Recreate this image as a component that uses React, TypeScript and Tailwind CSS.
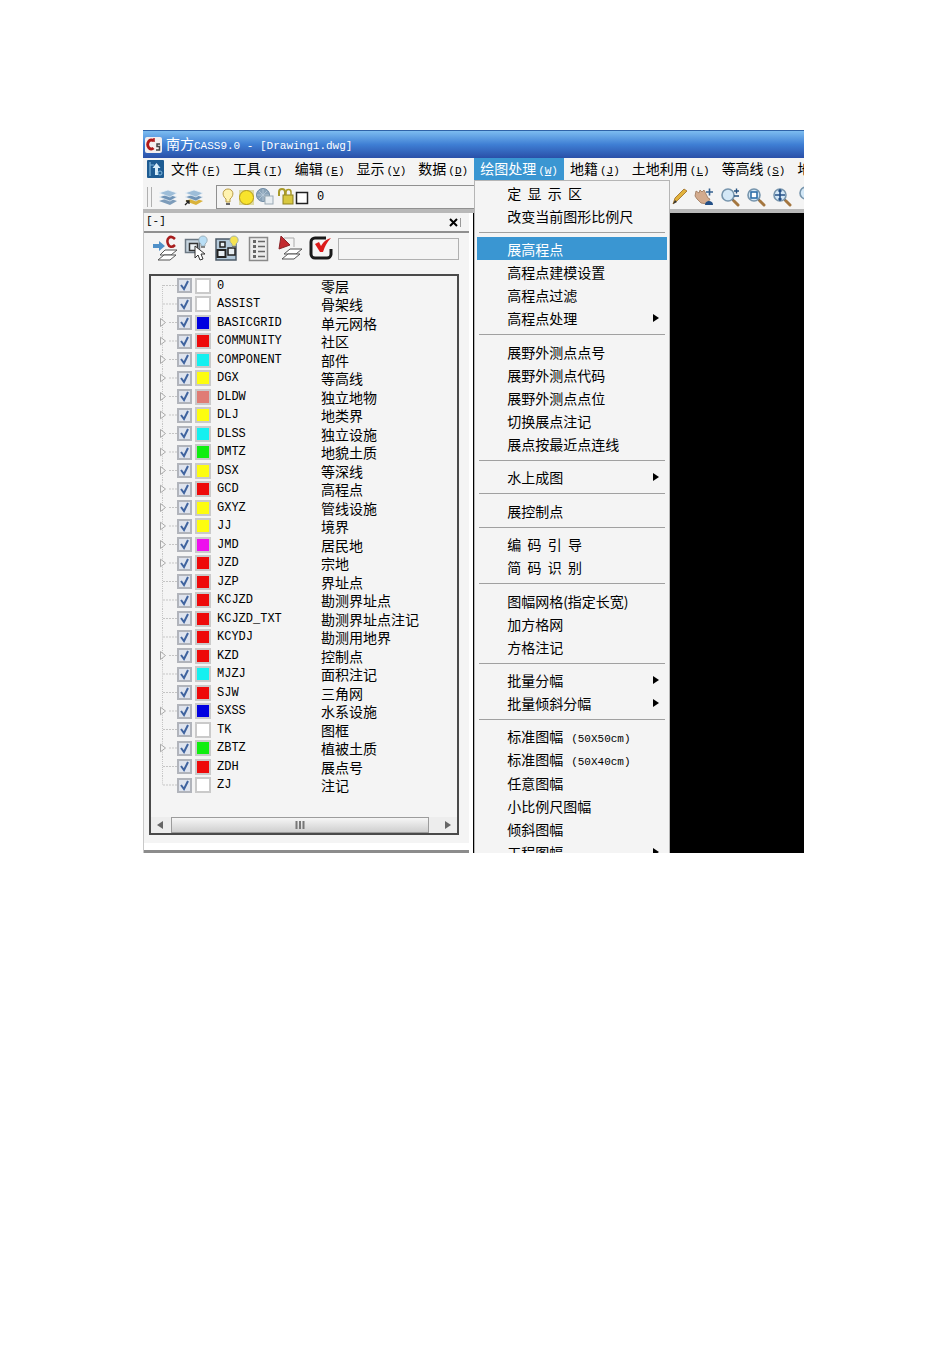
import type { ReactNode } from 'react';

type Layer = { code: string; label: string; color: string; open?: boolean };

const WHITE = 'bg-white';
const RED = 'bg-[#ee0a0a]';
const BLUE = 'bg-[#0000e0]';
const CYAN = 'bg-[#14f0f0]';
const YELLOW = 'bg-[#fdfd10]';
const GREEN = 'bg-[#10ee10]';

const layers: Layer[] = [
  { code: '0', label: '零层', color: WHITE },
  { code: 'ASSIST', label: '骨架线', color: WHITE },
  { code: 'BASICGRID', label: '单元网格', color: BLUE, open: true },
  { code: 'COMMUNITY', label: '社区', color: RED, open: true },
  { code: 'COMPONENT', label: '部件', color: CYAN, open: true },
  { code: 'DGX', label: '等高线', color: YELLOW, open: true },
  { code: 'DLDW', label: '独立地物', color: 'bg-[#e07c74]', open: true },
  { code: 'DLJ', label: '地类界', color: YELLOW, open: true },
  { code: 'DLSS', label: '独立设施', color: CYAN, open: true },
  { code: 'DMTZ', label: '地貌土质', color: GREEN, open: true },
  { code: 'DSX', label: '等深线', color: YELLOW, open: true },
  { code: 'GCD', label: '高程点', color: RED, open: true },
  { code: 'GXYZ', label: '管线设施', color: YELLOW, open: true },
  { code: 'JJ', label: '境界', color: YELLOW, open: true },
  { code: 'JMD', label: '居民地', color: 'bg-[#ee10ee]', open: true },
  { code: 'JZD', label: '宗地', color: RED, open: true },
  { code: 'JZP', label: '界址点', color: RED },
  { code: 'KCJZD', label: '勘测界址点', color: RED },
  { code: 'KCJZD_TXT', label: '勘测界址点注记', color: RED },
  { code: 'KCYDJ', label: '勘测用地界', color: RED },
  { code: 'KZD', label: '控制点', color: RED, open: true },
  { code: 'MJZJ', label: '面积注记', color: CYAN },
  { code: 'SJW', label: '三角网', color: RED },
  { code: 'SXSS', label: '水系设施', color: BLUE, open: true },
  { code: 'TK', label: '图框', color: WHITE },
  { code: 'ZBTZ', label: '植被土质', color: GREEN, open: true },
  { code: 'ZDH', label: '展点号', color: RED },
  { code: 'ZJ', label: '注记', color: WHITE },
];

const menus = [
  { label: '文件', key: 'F' },
  { label: '工具', key: 'T' },
  { label: '编辑', key: 'E' },
  { label: '显示', key: 'V' },
  { label: '数据', key: 'D' },
  { label: '绘图处理', key: 'W', active: true },
  { label: '地籍', key: 'J' },
  { label: '土地利用', key: 'L' },
  { label: '等高线', key: 'S' },
  { label: '地' },
];

type Item = { label: string; size?: string; sub?: boolean; active?: boolean };

const groups: Item[][] = [
  [{ label: '定  显  示  区' }, { label: '改变当前图形比例尺' }],
  [
    { label: '展高程点', active: true },
    { label: '高程点建模设置' },
    { label: '高程点过滤' },
    { label: '高程点处理', sub: true },
  ],
  [
    { label: '展野外测点点号' },
    { label: '展野外测点代码' },
    { label: '展野外测点点位' },
    { label: '切换展点注记' },
    { label: '展点按最近点连线' },
  ],
  [{ label: '水上成图', sub: true }],
  [{ label: '展控制点' }],
  [{ label: '编  码  引  导' }, { label: '简  码  识  别' }],
  [{ label: '图幅网格(指定长宽)' }, { label: '加方格网' }, { label: '方格注记' }],
  [
    { label: '批量分幅', sub: true },
    { label: '批量倾斜分幅', sub: true },
  ],
  [
    { label: '标准图幅', size: '(50X50cm)' },
    { label: '标准图幅', size: '(50X40cm)' },
    { label: '任意图幅' },
    { label: '小比例尺图幅' },
    { label: '倾斜图幅' },
    { label: '工程图幅', sub: true },
  ],
];

const mono = "font-['Liberation_Mono','Noto_Sans_CJK_SC',monospace]";

function ToolButton({ label, children }: { label: string; children: ReactNode }) {
  return (
    <button type="button" aria-label={label} className="shrink-0">
      {children}
    </button>
  );
}

function Sheets({ brush = false }: { brush?: boolean }) {
  return (
    <svg width="20" height="20" viewBox="0 0 20 20">
      <path d="M1 14l9-3 9 3-7 4z" fill={brush ? '#d9b23a' : '#7d9cba'} />
      <path d="M1 10l9-3 9 3-7 4z" fill="#6f93b6" stroke="#eef4f8" strokeWidth=".7" />
      <path d="M1 6l9-3 9 3-7 4z" fill="#9dbdd8" stroke="#eef4f8" strokeWidth=".7" />
      {brush && <path d="M1 18l4-4m-3 0h3v3" fill="none" stroke="#222" strokeWidth="1.3" />}
    </svg>
  );
}

function Magnifier({ children }: { children?: ReactNode }) {
  return (
    <svg width="20" height="20" viewBox="0 0 20 20">
      <path d="M12 12l2 2" stroke="#555" strokeWidth="2" />
      <path d="M14 14l4 4" stroke="#a4763f" strokeWidth="3" strokeLinecap="round" />
      <circle cx="8" cy="8" r="6" fill="#d4e8f7" stroke="#7795ad" strokeWidth="1.6" />
      {children}
    </svg>
  );
}

function Bulb({ fill }: { fill: string }) {
  return (
    <>
      <path d="M18 9c-4-3-2-8 2-8s6 5 2 8v2h-4z" fill={fill} stroke="#8fa3ad" strokeWidth=".8" />
      <path d="M18 12h4" stroke="#666" strokeWidth="1.5" />
    </>
  );
}

function TitleBar() {
  return (
    <header className="flex h-7 items-center gap-1 border-t border-[#2f63a8] bg-linear-to-b from-[#7dbcf0] via-[#3f7fd4] to-[#2a4fa8] pl-0.5 text-white">
      <svg width="17" height="18" viewBox="0 0 17 18">
        <rect x="0" y="1" width="17" height="16" rx="2" fill="#f4eeee" />
        <path d="M8.500 5a3.500 4.500 0 1 0 0 7" fill="none" stroke="#b01818" strokeWidth="2.800" />
        <path d="M9 2v4" stroke="#b01818" strokeWidth="1.500" />
        <path d="M15 8h-3v2.500h2.500V14H11" fill="none" stroke="#444" strokeWidth="1.500" />
      </svg>
      <h1 className={`text-[11px] whitespace-pre ${mono}`}>
        <span className="text-sm">南方</span>CASS9.0 - [Drawing1.dwg]
      </h1>
    </header>
  );
}

function DropMenu() {
  return (
    <div className="absolute top-full left-0 z-10 w-49 border border-[#b5b5b5] bg-[#f4f4f4] px-0.5 text-black">
      {groups.map((group, g) => (
        <div
          key={g}
          className="before:mx-0.5 before:mt-[5px] before:mb-1 before:block before:h-px before:bg-[#a0a0a0] first:before:hidden odd:before:mb-[5px]"
        >
          {group.map((item) => (
            <button
              type="button"
              key={item.label + item.size}
              className={`flex h-[23px] w-full items-center pr-2 pl-[30px] text-left ${
                item.active ? 'bg-[#3a96d2] text-white' : ''
              }`}
            >
              <span className="whitespace-pre">
                {item.label}
                {item.size && <span className={`pl-2 text-[11px] ${mono}`}>{item.size}</span>}
              </span>
              {item.sub && (
                <svg className="ml-auto" width="6" height="8" viewBox="0 0 6 8">
                  <path d="M0 0l6 4-6 4z" />
                </svg>
              )}
            </button>
          ))}
        </div>
      ))}
    </div>
  );
}

function MenuBar() {
  return (
    <nav className="flex h-[27px] items-start bg-[#f4f4f4] pl-1">
      <svg className="mt-0.5 shrink-0" width="18" height="18" viewBox="0 0 18 18">
        <rect width="17" height="18" rx="1" fill="#1d5b92" />
        <path d="M3 2v14M3 5h4" stroke="#7fb6dd" strokeWidth="1.200" />
        <path d="M9.500 3l4 5h-2.500v7H8V8H5.500z" fill="#d7ecf8" />
        <circle cx="13" cy="13" r="2" fill="none" stroke="#7fb6dd" />
      </svg>
      {menus.map((m) => (
        <div key={m.label} className="relative shrink-0">
          <button
            type="button"
            className={`flex h-[22px] items-baseline gap-0.5 px-1.5 whitespace-nowrap ${
              m.active ? 'bg-[#3a96d2] text-white' : ''
            }`}
          >
            {m.label}
            {m.key && (
              <span className={`text-[11px] ${mono}`}>
                (<u>{m.key}</u>)
              </span>
            )}
          </button>
          {m.active && <DropMenu />}
        </div>
      ))}
    </nav>
  );
}

function LayerBar() {
  return (
    <div className="flex h-7 items-center border-b-4 border-[#b8b8b8] bg-[#f4f4f4] pl-1">
      <span className="mr-1.5 h-5 w-[5px] shrink-0 border-x border-[#b0b0b0]" />
      <div className="flex shrink-0 gap-1.5">
        <ToolButton label="图层">
          <Sheets />
        </ToolButton>
        <ToolButton label="图层状态">
          <Sheets brush />
        </ToolButton>
      </div>
      <button
        type="button"
        className="ml-3 flex h-full w-70 shrink-0 items-center gap-2 border border-[#909090] pl-1"
      >
        <svg width="88" height="20" viewBox="0 0 88 20">
          <path d="M5 12C0 8 2 2 7 2s7 6 2 10v3H5z" fill="#fff3b0" stroke="#b99b43" />
          <path d="M5 17h4" stroke="#666" strokeWidth="2" />
          <rect x="18" y="3" width="15" height="15" fill="#ddd9a0" />
          <circle cx="25.500" cy="10.500" r="7" fill="#f8e32c" stroke="#b3981c" />
          <circle cx="42" cy="8" r="6.500" fill="#8aa3b8" stroke="#708ca5" />
          <path d="M42 2v12M36 8h12M38 4l8 8M46 4l-8 8" stroke="#b9cad8" strokeWidth=".8" />
          <rect x="44" y="9" width="8" height="8" fill="#e8eef2" stroke="#9aa9b4" />
          <path d="M58 9V5a3 3 0 0 1 6 0v4" fill="none" stroke="#a99a28" strokeWidth="2" />
          <rect x="62" y="8" width="10" height="9" fill="#d8c840" stroke="#8f8220" />
          <path d="M65 8V5a2.500 2.500 0 0 1 5 0v3" fill="none" stroke="#a99a28" strokeWidth="1.500" />
          <rect x="75.500" y="5.500" width="11" height="11" fill="#fff" stroke="#222" strokeWidth="1.500" />
        </svg>
        <span className={`text-xs ${mono}`}>0</span>
      </button>
      <div className="flex flex-1 justify-end gap-1.5 overflow-hidden">
        <ToolButton label="画笔">
          <svg width="20" height="20" viewBox="0 0 20 20">
            <path d="M5 17l2-6 9-9 3 2-9 9z" fill="#e2b23c" stroke="#9a6a20" strokeWidth=".8" />
            <path d="M5 17l2-4 2 2z" fill="#333" />
          </svg>
        </ToolButton>
        <ToolButton label="平移">
          <svg width="20" height="20" viewBox="0 0 20 20">
            <path
              d="M2 4l3 2 1-3 2 2 2-2 2 4 2 4 2 1-3 5-6-1-4-4-2-3z"
              fill="#d3ab8e"
              stroke="#9c7659"
              strokeWidth=".8"
            />
            <path d="M12 5h7M15.500 1.500v7" stroke="#35608f" strokeWidth="1.600" />
            <path d="M11 18c0-3 2-4 4-4s4 1 4 4z" fill="#234f86" />
          </svg>
        </ToolButton>
        <ToolButton label="实时缩放">
          <Magnifier>
            <path d="M14 4h5M16.500 1.500v5M14 9h5" stroke="#24507f" strokeWidth="1.400" />
          </Magnifier>
        </ToolButton>
        <ToolButton label="窗口缩放">
          <Magnifier>
            <rect x="5" y="5" width="6" height="6" fill="#fff" stroke="#2e6ea8" strokeWidth="1.600" />
          </Magnifier>
        </ToolButton>
        <ToolButton label="范围缩放">
          <Magnifier>
            <path
              d="M8 3v10M3 8h10M6.500 4.500L8 3l1.500 1.500M6.500 11.500L8 13l1.500-1.500"
              fill="none"
              stroke="#234f86"
              strokeWidth="1.600"
            />
          </Magnifier>
        </ToolButton>
        <div className="w-1.5 overflow-hidden">
          <ToolButton label="上一视图">
            <Magnifier />
          </ToolButton>
        </div>
      </div>
    </div>
  );
}

function PanelTools() {
  return (
    <div className="flex h-[41px] items-start gap-1 pt-0.5 pl-2">
      <ToolButton label="置为当前">
        <svg width="27" height="27" viewBox="0 0 27 27">
          <path d="M1 9h6V6l6 5-6 5v-3H1z" fill="#4f90c8" />
          <path d="M8 20l5-5h12l-6 5z" fill="#fff" stroke="#555" />
          <path d="M6 25l6-5h12l-6 5z" fill="#fff" stroke="#555" />
          <path d="M23 4c-5-5-9 0-7 5 1 3 4 4 7 1" fill="none" stroke="#a81c1c" strokeWidth="2.500" />
        </svg>
      </ToolButton>
      <ToolButton label="选择图层">
        <svg width="27" height="27" viewBox="0 0 27 27">
          <rect x="2.500" y="4.500" width="14" height="13" fill="#c7d5df" stroke="#6b7782" strokeWidth="1.500" />
          <rect x="6.500" y="8.500" width="8" height="7" fill="#eef3f6" stroke="#333" strokeWidth="1.500" />
          <path d="M12 11v12l3-3 2 5 3-1-2-5h4z" fill="#fff" stroke="#333" />
          <Bulb fill="#b9def5" />
        </svg>
      </ToolButton>
      <ToolButton label="显示图层">
        <svg width="27" height="27" viewBox="0 0 27 27">
          <rect x="2" y="4" width="20" height="21" fill="#b4cadb" stroke="#4d5b68" strokeWidth="1.500" />
          <rect x="6" y="7" width="5" height="5" fill="#e7eef3" stroke="#222" strokeWidth="1.500" />
          <rect x="3.500" y="15" width="8" height="7" fill="#e7eef3" stroke="#222" strokeWidth="2" />
          <rect x="14" y="13" width="7" height="7" fill="#e7eef3" stroke="#222" strokeWidth="1.500" />
          <Bulb fill="#f6e352" />
        </svg>
      </ToolButton>
      <ToolButton label="图层列表">
        <svg width="27" height="27" viewBox="0 0 27 27">
          <rect x="4.500" y="2.500" width="18" height="23" fill="#ececec" stroke="#8a8a8a" strokeWidth="1.500" />
          <path d="M8 6.500h3M8 11.500h3M8 16.500h3M8 21.500h3" stroke="#666" strokeWidth="3" />
          <path d="M13 6.500h7M13 11.500h7M13 16.500h7M13 21.500h7" stroke="#666" strokeWidth="1.300" />
        </svg>
      </ToolButton>
      <ToolButton label="删除图层">
        <svg width="27" height="27" viewBox="0 0 27 27">
          <path d="M8 19l6-5h12l-6 5z" fill="#fff" stroke="#555" />
          <path d="M6 24l6-5h12l-6 5z" fill="#fff" stroke="#555" />
          <path d="M8 3h10v9" fill="none" stroke="#aaa" />
          <path d="M5 1l9 9-11 4z" fill="#c32a30" stroke="#8a2428" />
        </svg>
      </ToolButton>
      <ToolButton label="全部选中">
        <svg width="27" height="27" viewBox="0 0 27 27">
          <path
            d="M19 3H8a4 4 0 0 0-4 4v12a4 4 0 0 0 4 4h12a4 4 0 0 0 4-4v-5"
            fill="none"
            stroke="#1a1a1a"
            strokeWidth="3"
          />
          <path d="M8 9l4-2 2 4c3-5 6-7 10-8-4 4-6 8-8 14h-3z" fill="#dc1a1a" />
        </svg>
      </ToolButton>
      <input
        type="text"
        aria-label="图层名"
        className="mt-[3px] mr-2.5 h-[22px] min-w-0 flex-1 border border-[#b0b0b0] bg-[#f4f4f4] px-1 text-xs"
      />
    </div>
  );
}

function LayerRow({ layer }: { layer: Layer }) {
  return (
    <li className="group flex h-[18px] items-center odd:h-[19px]">
      <span className="flex w-[26px] shrink-0 justify-end self-stretch">
        <svg className="h-full w-5" viewBox="0 0 20 19" preserveAspectRatio="none">
          <path
            d="M5.500 0v19"
            stroke="#c4c4c4"
            strokeDasharray="1 1"
            className="group-first:hidden group-last:hidden"
          />
          <path d="M5.500 9v10" stroke="#c4c4c4" strokeDasharray="1 1" className="hidden group-first:block" />
          <path d="M5.500 0v9" stroke="#c4c4c4" strokeDasharray="1 1" className="hidden group-last:block" />
          <path d={layer.open ? 'M12 9.500h8' : 'M6 9.500h14'} stroke="#c4c4c4" strokeDasharray="2 1" />
          {layer.open && <path d="M3.500 5.500v8l5-4z" fill="#f4f4f4" stroke="#a8a8a8" />}
        </svg>
      </span>
      <label className="flex flex-1 items-center">
        <span className="grid">
          <input
            type="checkbox"
            defaultChecked
            className="col-start-1 row-start-1 size-[15px] appearance-none border-2 border-[#b1b4bb] bg-[#dfe4ee]"
          />
          <svg className="pointer-events-none col-start-1 row-start-1" width="15" height="15" viewBox="0 0 15 15">
            <path d="M4 7l3 4 4-8" fill="none" stroke="#3f639f" strokeWidth="2" />
          </svg>
        </span>
        <span className={`ml-[3px] size-4 border-2 border-[#cacaca] ${layer.color}`} />
        <span className={`ml-1.5 w-26 text-xs ${mono}`}>{layer.code}</span>
        <span className="leading-[18px]">{layer.label}</span>
      </label>
    </li>
  );
}

function LayerPanel() {
  return (
    <aside className="flex w-83 shrink-0 border-r-2 border-black bg-white">
      <div className="w-[326px] border-l border-[#c8c8c8] bg-[#f4f4f4]">
        <div className="flex h-5 items-center justify-between border-b-2 border-[#909090] pr-2 pl-0.5">
          <button type="button" aria-label="折叠" className={`text-[11px] ${mono}`}>
            [-]
          </button>
          <button type="button" aria-label="关闭" className="border-r border-[#999] pr-px">
            <svg width="10" height="9" viewBox="0 0 10 9">
              <path d="M1 1l7 7M8 1L1 8" stroke="#000" strokeWidth="2" />
            </svg>
          </button>
        </div>
        <PanelTools />
        <div className="mr-2.5 ml-[5px] border-2 border-[#4a4a4a]">
          <ul className="mb-[23px]">
            {layers.map((layer) => (
              <LayerRow key={layer.code} layer={layer} />
            ))}
          </ul>
          <div className="flex h-4 items-center bg-[#ededed] px-1.5">
            <svg width="6" height="8" viewBox="0 0 6 8">
              <path d="M6 0L0 4l6 4z" fill="#666" />
            </svg>
            <div className="mr-4 ml-2 flex h-4 flex-1 items-center justify-center border border-[#9c9c9c] bg-linear-to-b from-[#f6f6f6] to-[#cfcfcf]">
              <svg width="10" height="8" viewBox="0 0 10 8">
                <path d="M1.500 0v8M5 0v8M8.500 0v8" stroke="#777" strokeWidth="2" />
              </svg>
            </div>
            <svg width="6" height="8" viewBox="0 0 6 8">
              <path d="M0 0l6 4-6 4z" fill="#666" />
            </svg>
          </div>
        </div>
        <div className="mt-2 h-2.5 border-b-3 border-[#8c8c8c] bg-white" />
      </div>
    </aside>
  );
}

export default function App() {
  return (
    <main className="bg-white pt-[130px] pr-[146px] pl-[143px] font-['Noto_Sans_CJK_SC',sans-serif] text-sm text-black">
      <div className="overflow-hidden">
        <TitleBar />
        <MenuBar />
        <LayerBar />
        <div className="flex">
          <LayerPanel />
          <div className="flex-1 bg-black" />
        </div>
      </div>
    </main>
  );
}
